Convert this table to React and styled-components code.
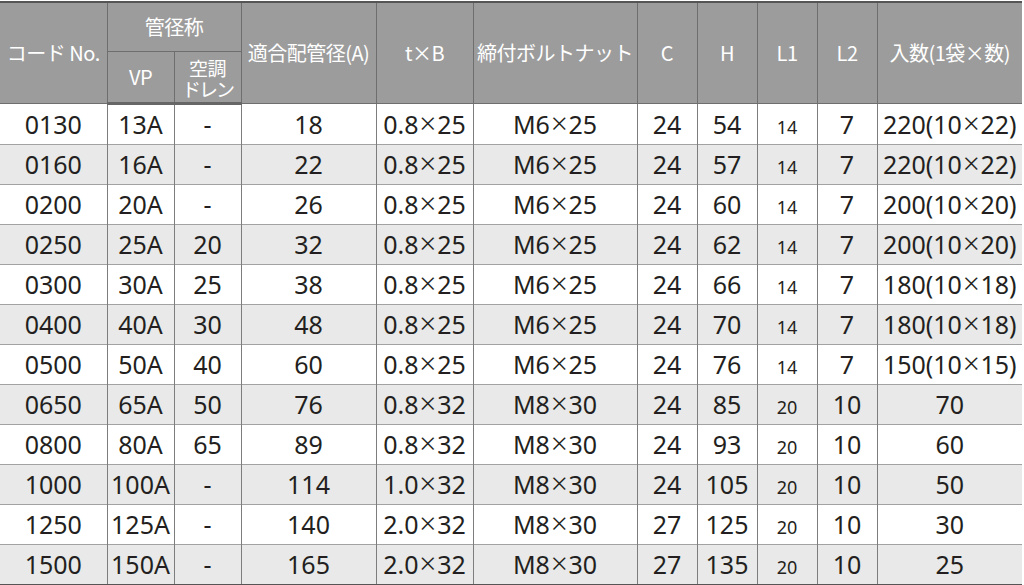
import React from 'react';
import styled, { createGlobalStyle } from 'styled-components';

const GlobalStyle = createGlobalStyle`
	html, body {
		margin: 0;
		padding: 0;
		background: #fff;
	}
	body {
		font-family: 'Noto Sans', 'Noto Sans CJK JP', sans-serif;
		color: #231f20;
	}
`;

const rows = [
	['0130', '13A', '-', '18', '0.8×25', 'M6×25', '24', '54', '14', '7', '220(10×22)'],
	['0160', '16A', '-', '22', '0.8×25', 'M6×25', '24', '57', '14', '7', '220(10×22)'],
	['0200', '20A', '-', '26', '0.8×25', 'M6×25', '24', '60', '14', '7', '200(10×20)'],
	['0250', '25A', '20', '32', '0.8×25', 'M6×25', '24', '62', '14', '7', '200(10×20)'],
	['0300', '30A', '25', '38', '0.8×25', 'M6×25', '24', '66', '14', '7', '180(10×18)'],
	['0400', '40A', '30', '48', '0.8×25', 'M6×25', '24', '70', '14', '7', '180(10×18)'],
	['0500', '50A', '40', '60', '0.8×25', 'M6×25', '24', '76', '14', '7', '150(10×15)'],
	['0650', '65A', '50', '76', '0.8×32', 'M8×30', '24', '85', '20', '10', '70'],
	['0800', '80A', '65', '89', '0.8×32', 'M8×30', '24', '93', '20', '10', '60'],
	['1000', '100A', '-', '114', '1.0×32', 'M8×30', '24', '105', '20', '10', '50'],
	['1250', '125A', '-', '140', '2.0×32', 'M8×30', '27', '125', '20', '10', '30'],
	['1500', '150A', '-', '165', '2.0×32', 'M8×30', '27', '135', '20', '10', '25'],
];

const widths = [107, 67, 67, 135, 97, 164, 60, 60, 60, 60, 145];

// splits "0.8×25" so the multiply sign gets its own size
const withTimes = (text) => {
	const parts = text.split('×');
	if (parts.length === 1) return text;
	return (
		<>
			{parts[0]}
			<Times>×</Times>
			{parts[1]}
		</>
	);
};

const App = () => {
	return (
		<Page>
			<GlobalStyle />
			<Table>
				<colgroup>
					{widths.map((w, i) => (
						<col key={i} style={{ width: w }} />
					))}
				</colgroup>
				<thead>
					<tr>
						<HeadCell rowSpan={2}>コード No.</HeadCell>
						<HeadCell colSpan={2} $top>
							管径称
						</HeadCell>
						<HeadCell rowSpan={2}>適合配管径(A)</HeadCell>
						<HeadCell rowSpan={2}>t×B</HeadCell>
						<HeadCell rowSpan={2}>締付ボルトナット</HeadCell>
						<HeadCell rowSpan={2}>C</HeadCell>
						<HeadCell rowSpan={2}>H</HeadCell>
						<HeadCell rowSpan={2}>L1</HeadCell>
						<HeadCell rowSpan={2}>L2</HeadCell>
						<HeadCell rowSpan={2}>入数(1袋×数)</HeadCell>
					</tr>
					<tr>
						<HeadCell $sub>VP</HeadCell>
						<HeadCell $sub>
							<Stack>
								<span>空調</span>
								<Narrow>ドレン</Narrow>
							</Stack>
						</HeadCell>
					</tr>
				</thead>
				<tbody>
					{rows.map((row, r) => (
						<Row key={row[0]} $alt={r % 2 === 1}>
							{row.map((value, c) =>
								c === 8 ? (
									<Cell key={c}>
										<Small>{value}</Small>
									</Cell>
								) : (
									<Cell key={c}>{withTimes(value)}</Cell>
								)
							)}
						</Row>
					))}
				</tbody>
			</Table>
		</Page>
	);
};

export default App;

const Page = styled.div`
	padding-top: 1px;
	width: 1024px;
	height: 585px;
	overflow: hidden;
	box-sizing: border-box;
`;

const Table = styled.table`
	width: 1022px;
	border-collapse: collapse;
	table-layout: fixed;
	border-top: 2px solid #555;
	border-bottom: 2px solid #555;

	thead tr:last-child th {
		border-bottom: 3px solid #666;
	}
`;

const HeadCell = styled.th`
	background: #9c9c9c;
	color: #fff;
	font-family: 'Noto Sans CJK JP', 'Noto Sans', sans-serif;
	font-weight: 400;
	font-size: 20px;
	line-height: 24px;
	letter-spacing: -0.5px;
	text-align: center;
	padding: 0;
	height: ${(p) => (p.$top ? '48px' : p.$sub ? '50px' : 'auto')};
	border-left: 1px solid #6e6e6e;
	border-right: 1px solid #6e6e6e;
	border-bottom: 1px solid #6e6e6e;
	white-space: nowrap;

	&:first-child {
		border-left: none;
	}
	&:last-child {
		border-right: none;
	}
	tr:last-child > &:first-child {
		border-left: 1px solid #6e6e6e;
	}
`;

const Stack = styled.div`
	display: flex;
	flex-direction: column;
	align-items: center;
	font-size: 19px;
	line-height: 21px;
	padding-top: 2px;
`;

const Narrow = styled.span`
	letter-spacing: -2px;
`;

const Row = styled.tr`
	background: ${(p) => (p.$alt ? '#e8e9e8' : '#fff')};
	border-top: 1px solid #a2a2a2;

	&:first-child {
		border-top: none;
	}
`;

const Cell = styled.td`
	height: 39px;
	padding: 0;
	text-align: center;
	white-space: nowrap;
	font-size: 25px;
	line-height: 39px;
	border-left: 1px solid #7d7d7d;
	border-right: 1px solid #7d7d7d;

	&:first-child {
		border-left: none;
	}
	&:last-child {
		border-right: none;
	}
`;

const Small = styled.span`
	font-size: 18px;
	line-height: 1;
`;

const Times = styled.span`
	font-family: 'Noto Sans', sans-serif;
	font-size: 29px;
	font-weight: 300;
	line-height: 1;
	margin: 0 1px;
`;
